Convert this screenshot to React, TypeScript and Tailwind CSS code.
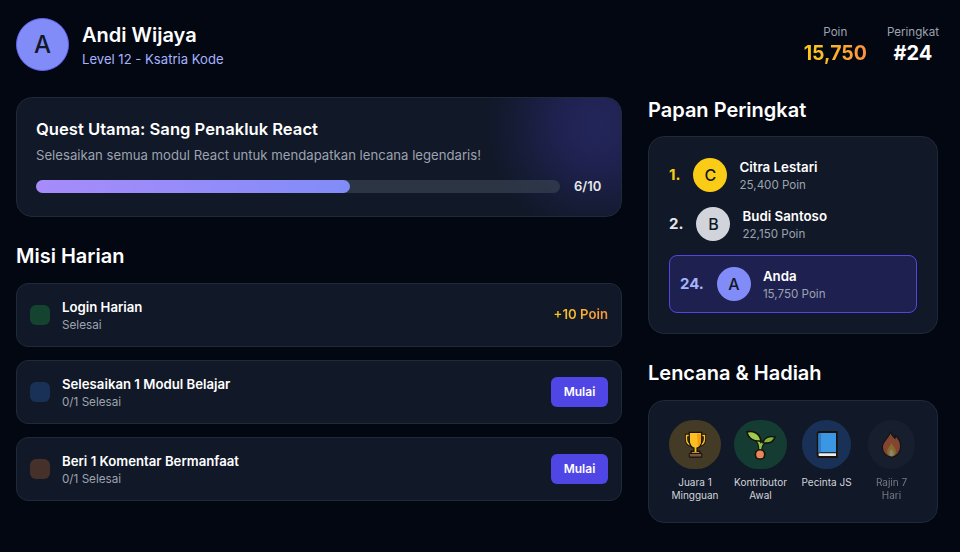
const font = { fontFamily: 'Inter, "Noto Sans", sans-serif' };

function Trophy() {
  return (
    <svg width="25" height="27" viewBox="0 1 32 30" preserveAspectRatio="none">
      <path d="M9 6H4.500v4c0 4 3 6.500 6 6.500M23 6h4.500v4c0 4-3 6.500-6 6.500" fill="none" stroke="#1a1208" strokeWidth="4" />
      <path d="M9 6H4.500v4c0 4 3 6.500 6 6.500M23 6h4.500v4c0 4-3 6.500-6 6.500" fill="none" stroke="#fbbf24" strokeWidth="1.800" />
      <path d="M8 2.500h16V12c0 4.500-3.500 7.500-6 8v3.500h3.500V26h-11v-2.500H14V20c-2.500-.5-6-3.500-6-8z" fill="#fbbf24" stroke="#1a1208" strokeWidth="1.600" />
      <path d="M18 4h5v8c0 3-2 5.500-4 6.500z" fill="#f59e0b" />
      <rect x="8" y="26" width="16" height="4" rx="0.500" fill="#795548" stroke="#1a1208" strokeWidth="1.300" />
    </svg>
  );
}

function Sprout() {
  return (
    <svg width="30" height="30" viewBox="0 0 32 32">
      <path d="M15 24C16 17 15 13 11 10M15.500 19c0-3 2.500-6 6.500-7" fill="none" stroke="#1a1208" strokeWidth="4.600" />
      <path d="M15 24C16 17 15 13 11 10M15.500 19c0-3 2.500-6 6.500-7" fill="none" stroke="#8bc34a" strokeWidth="2.200" />
      <path d="M1 2C7 .5 14.500 3 16 11.500 9 12.500 2.500 9.500 1 2z" fill="#9ccc50" stroke="#1a1208" strokeWidth="1.700" />
      <path d="M31 7.500c-2 5.500-7 7.500-13 6 1.500-5.500 7-7.500 13-6z" fill="#7cb342" stroke="#1a1208" strokeWidth="1.700" />
      <circle cx="15" cy="26" r="5" fill="#e8875b" stroke="#1a1208" strokeWidth="1.700" />
    </svg>
  );
}

function Book() {
  return (
    <svg width="24" height="29" viewBox="0 0 28 30" preserveAspectRatio="none">
      <path d="M5 1h21.500v28H5.500A3.500 3.500 0 0 1 2 25.500V4A3 3 0 0 1 5 1z" fill="#1a1208" />
      <path d="M5.500 3H24.500v20H5.500A2 2 0 0 0 4 23.500V4.500A1.500 1.500 0 0 1 5.500 3z" fill="#3b97e3" />
      <path d="M4 4.500A1.500 1.500 0 0 1 5.500 3H7v20H5.500A2 2 0 0 0 4 23.500z" fill="#2b7cc4" />
      <path d="M5.500 24H24.500v3H5.500a1.500 1.500 0 0 1 0-3z" fill="#e8eef3" />
    </svg>
  );
}

function Flame() {
  return (
    <svg width="21" height="27" viewBox="0 0 24 30" preserveAspectRatio="none">
      <path d="M11 1c1 4 3 5 5 7 .5-1 .5-2 .5-3 3.500 3 6 7 6 12 0 7-5 12-10.500 12S1.500 24.500 1.500 18C1.500 11 9 8 11 1z" fill="#f4733a" stroke="#1a1208" strokeWidth="1.500" />
      <path d="M12 13c.5 3 5 5 5 10 0 3-2.500 5-5 5s-5-2-5-5c0-4 4-6 5-10z" fill="#fbc02d" />
      <path d="M12 20c.5 1.500 2.500 2.500 2.500 5 0 1.500-1 3-2.500 3s-2.500-1.500-2.500-3c0-2.500 2-3.500 2.500-5z" fill="#fff3c4" />
    </svg>
  );
}

function Mission({ color, title, sub, action }: { color: string; title: string; sub: string; action: React.ReactNode }) {
  return (
    <div className="flex h-16 items-center justify-between rounded-xl border border-[#1f2937] bg-[#111827] pl-[13px] pr-[13px]">
      <div className="flex items-center gap-3">
        <div className={`h-5 w-5 rounded-md ${color}`} />
        <div>
          <p className="text-[13.2px] leading-[20px] font-semibold text-white">{title}</p>
          <p className="text-[11.7px] leading-[16px] text-[#9ca3af]">{sub}</p>
        </div>
      </div>
      {action}
    </div>
  );
}

function StartButton() {
  return (
    <button className="h-[30px] w-[57px] rounded-md bg-[#4f46e5] text-xs font-semibold text-white">Mulai</button>
  );
}

function Rank({ rank, rankColor, avatar, letter, name, points }: { rank: string; rankColor: string; avatar: string; letter: string; name: string; points: string }) {
  return (
    <div className="flex items-center gap-3">
      <div className="flex items-center gap-[13px]">
        <span className={`text-[15px] font-bold ${rankColor}`}>{rank}</span>
        <div className={`flex h-[34px] w-[34px] items-center justify-center rounded-full text-base font-medium text-[#111827] ${avatar}`}>{letter}</div>
      </div>
      <div>
        <p className="text-[13.3px] leading-[20px] font-semibold text-white">{name}</p>
        <p className="text-[11.6px] leading-[16px] text-[#9ca3af]">{points}</p>
      </div>
    </div>
  );
}

function Badge({ bg, icon, label, className }: { bg: string; icon: React.ReactNode; label: React.ReactNode; className: string }) {
  return (
    <div className={`flex flex-col items-center ${className}`}>
      <div className={`mb-[7px] flex h-[49px] w-full items-center justify-center rounded-full ${bg}`}>{icon}</div>
      <p className="text-center text-[10px] leading-[13px] whitespace-nowrap text-[#d1d5db]">{label}</p>
    </div>
  );
}

export default function App() {
  return (
    <div className="h-[552px] overflow-hidden bg-[#030712] pl-4 pr-[21px] pt-[18px]" style={font}>
      <header className="flex items-center justify-between">
        <div className="flex items-center gap-[13px]">
          <div className="flex h-[53px] w-[53px] items-center justify-center rounded-full border border-[#6366f1] bg-[#818cf8] text-2xl font-medium text-[#111827]">A</div>
          <div>
            <h1 className="text-xl leading-[28px] font-semibold text-white">Andi Wijaya</h1>
            <p className="text-[13.1px] leading-[20px] text-[#a5b4fc]">Level 12 - Ksatria Kode</p>
          </div>
        </div>
        <div className="flex gap-5 text-center">
          <div>
            <p className="text-[11.6px] leading-[16px] text-[#9ca3af]">Poin</p>
            <p className="bg-gradient-to-r from-[#facc15] to-[#fb923c] bg-clip-text text-[19.500px] leading-[26px] font-bold text-transparent">15,750</p>
          </div>
          <div>
            <p className="text-[11.6px] leading-[16px] text-[#9ca3af]">Peringkat</p>
            <p className="text-xl leading-[26px] font-bold text-white">#24</p>
          </div>
        </div>
      </header>

      <div className="mt-[26px] grid grid-cols-[606px_290px] gap-[26px]">
        <main>
          <section className="h-[120px] rounded-2xl border border-[#1f2937] bg-[#111827] bg-[radial-gradient(circle_112px_at_580px_28px,#23265a_0%,#1f2250_35%,#171c38_70%,#111827_100%)] pl-[19px] pt-[19px]">
            <h2 className="text-[16.6px] leading-[24px] font-semibold text-white">Quest Utama: Sang Penakluk React</h2>
            <p className="mt-[4px] text-[13.17px] leading-[20px] text-[#9ca3af]">Selesaikan semua modul React untuk mendapatkan lencana legendaris!</p>
            <div className="mt-[12px] flex items-center gap-[14px]">
              <div className="h-[13px] w-[524px] shrink-0 rounded-full bg-[#374151]/70">
                <div className="h-full w-[60%] rounded-full bg-gradient-to-r from-[#a78bfa] to-[#818cf8]" />
              </div>
              <span className="text-[13px] font-semibold text-[#e5e7eb]">6/10</span>
            </div>
          </section>

          <h2 className="mt-[25px] text-xl leading-[28px] font-semibold text-white">Misi Harian</h2>
          <div className="mt-[13px] flex flex-col gap-[13px]">
            <Mission color="bg-[#14432f]" title="Login Harian" sub="Selesai" action={<span className="bg-gradient-to-r from-[#facc15] to-[#fb923c] bg-clip-text text-[13.2px] font-semibold text-transparent">+10 Poin</span>} />
            <Mission color="bg-[#1a3157]" title="Selesaikan 1 Modul Belajar" sub="0/1 Selesai" action={<StartButton />} />
            <Mission color="bg-[#46302a]" title="Beri 1 Komentar Bermanfaat" sub="0/1 Selesai" action={<StartButton />} />
          </div>
        </main>

        <aside>
          <h2 className="text-xl leading-[26px] font-semibold text-white">Papan Peringkat</h2>
          <div className="mt-[13px] h-[198px] rounded-2xl border border-[#1f2937] bg-[#111827] px-5 pt-[20px]">
            <Rank rank="1." rankColor="text-[#facc15]" avatar="bg-[#facc15]" letter="C" name="Citra Lestari" points="25,400 Poin" />
            <div className="mt-[13px]">
              <Rank rank="2." rankColor="text-[#e5e7eb]" avatar="bg-[#d1d5db]" letter="B" name="Budi Santoso" points="22,150 Poin" />
            </div>
            <div className="mt-[13px] flex h-[58px] items-center rounded-lg border border-[#4f46e5] bg-[#1e2150] pl-[10px]">
              <Rank rank="24." rankColor="text-[#a5b4fc]" avatar="bg-[#818cf8]" letter="A" name="Anda" points="15,750 Poin" />
            </div>
          </div>

          <h2 className="mt-[25px] text-xl leading-[28px] font-semibold text-white">Lencana &amp; Hadiah</h2>
          <div className="mt-[13px] flex h-[123px] items-start rounded-2xl border border-[#1f2937] bg-[#111827] pl-[20px] pt-[19px]">
            <Badge className="w-[52px]" bg="bg-[#433b26]" icon={<Trophy />} label={<>Juara 1<br />Mingguan</>} />
            <Badge className="ml-[13px] w-[53px]" bg="bg-[#143c33]" icon={<Sprout />} label={<>Kontributor<br />Awal</>} />
            <Badge className="ml-[15px] w-[49px]" bg="bg-[#1a3157]" icon={<Book />} label="Pecinta JS" />
            <div className="ml-[17px] w-[47px] opacity-50">
              <Badge className="w-full" bg="bg-[#374151]/30" icon={<Flame />} label={<>Rajin 7<br />Hari</>} />
            </div>
          </div>
        </aside>
      </div>
    </div>
  );
}
